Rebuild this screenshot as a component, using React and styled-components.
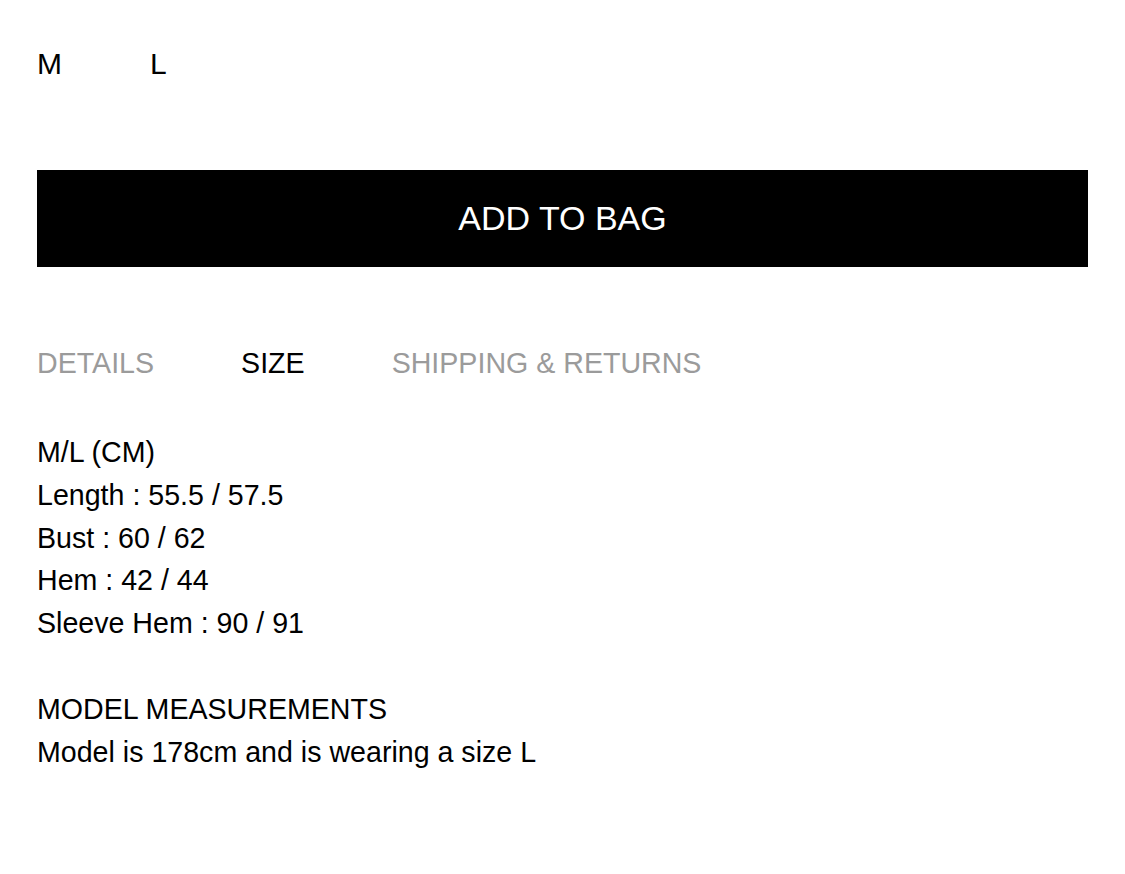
import React, { useState } from "react";
import styled, { createGlobalStyle } from "styled-components";

const GlobalStyle = createGlobalStyle`
  html, body {
    margin: 0;
    padding: 0;
    background: #fff;
  }
  body {
    font-family: "Liberation Sans", Arial, sans-serif;
    color: #000;
  }
`;

const sizes = ["M", "L"];
const tabs = ["DETAILS", "SIZE", "SHIPPING & RETURNS"];

const measurements = [
  "M/L (CM)",
  "Length : 55.5 / 57.5",
  "Bust : 60 / 62",
  "Hem : 42 / 44",
  "Sleeve Hem : 90 / 91",
];

function App() {
  const [size, setSize] = useState("L");
  const [tab, setTab] = useState("SIZE");

  return (
    <Page>
      <GlobalStyle />
      <SizeRow>
        {sizes.map((s) => (
          <SizeOption key={s} onClick={() => setSize(s)} $active={s === size}>
            {s}
          </SizeOption>
        ))}
      </SizeRow>

      <AddButton>ADD TO BAG</AddButton>

      <Tabs>
        {tabs.map((t) => (
          <Tab key={t} $active={t === tab} onClick={() => setTab(t)}>
            {t}
          </Tab>
        ))}
      </Tabs>

      <Content>
        <Block>
          {measurements.map((m) => (
            <Line key={m}>{m}</Line>
          ))}
        </Block>
        <Block>
          <Line>MODEL MEASUREMENTS</Line>
          <Line>Model is 178cm and is wearing a size L</Line>
        </Block>
      </Content>
    </Page>
  );
}

const Page = styled.div`
  padding: 49px 37px 80px 37px;
  display: flex;
  flex-direction: column;
`;

const SizeRow = styled.div`
  display: flex;
  gap: 88px;
  height: 30px;
`;

const SizeOption = styled.button`
  border: none;
  background: none;
  padding: 0;
  margin: 0;
  font-family: inherit;
  font-size: 30px;
  line-height: 30px;
  color: #000;
  cursor: pointer;
`;

const AddButton = styled.button`
  margin-top: 91px;
  height: 97px;
  width: 100%;
  border: none;
  background: #000;
  color: #fff;
  font-family: inherit;
  font-size: 34px;
  cursor: pointer;
  display: flex;
  align-items: center;
  justify-content: center;
  padding: 0;
`;

const Tabs = styled.div`
  margin-top: 82px;
  display: flex;
  gap: 87px;
`;

const Tab = styled.button`
  border: none;
  background: none;
  padding: 0;
  font-family: inherit;
  font-size: 28.6px;
  line-height: 28px;
  color: ${(p) => (p.$active ? "#000" : "#9b9b9b")};
  cursor: pointer;
`;

const Content = styled.div`
  margin-top: 54px;
  display: flex;
  flex-direction: column;
  gap: 42.8px;
`;

const Block = styled.div`
  display: flex;
  flex-direction: column;
`;

const Line = styled.div`
  font-size: 28.6px;
  line-height: 42.8px;
  color: #000;
`;

export default App;
